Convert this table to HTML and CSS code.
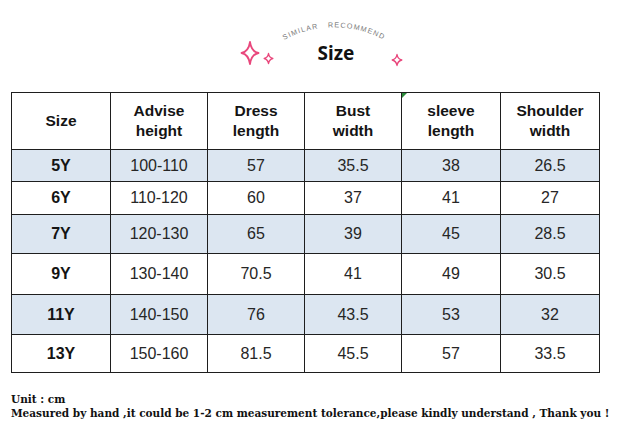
FILE: index.html
```html
<!DOCTYPE html>
<html lang="en">
<head>
<meta charset="utf-8">
<title>Size chart</title>
<link rel="stylesheet" href="styles.css">
</head>
<body>
<header class="hero">
  <div class="hero-inner">
    <svg class="hero-deco" width="196" height="92" viewBox="0 0 196 92" aria-hidden="true">
      <defs>
        <path id="arc" d="M 40 43.5 A 105 105 0 0 1 152 43.5"/>
      </defs>
      <g fill="none" stroke="#e9477c" stroke-width="1.8" stroke-linejoin="round">
        <path d="M12 42 Q13.4 51.6 20.5 53 Q13.4 54.4 12 64 Q10.6 54.4 3.5 53 Q10.6 51.6 12 42 Z"/>
        <path d="M30.5 53.5 Q31.2 57.6 34.8 58.5 Q31.2 59.4 30.5 63.5 Q29.8 59.4 26.2 58.5 Q29.8 57.6 30.5 53.5 Z" stroke-width="1.4"/>
        <path d="M159 54.5 Q159.7 59 163.8 60 Q159.7 61 159 65.5 Q158.3 61 154.2 60 Q158.3 59 159 54.5 Z" stroke-width="1.3"/>
      </g>
      <text class="arc-text"><textPath href="#arc" startOffset="50%" text-anchor="middle">SIMILAR&#160;&#160;&#160;RECOMMEND</textPath></text>
    </svg>
    <h1 class="title">Size</h1>
  </div>
</header>

<table class="chart">
  <colgroup>
    <col class="c1"><col class="c2"><col class="c3"><col class="c4"><col class="c5"><col class="c6">
  </colgroup>
  <thead>
    <tr class="r0">
      <th>Size</th>
      <th>Advise<br>height</th>
      <th>Dress<br>length</th>
      <th>Bust<br>width</th>
      <th class="flag">sleeve<br>length</th>
      <th>Shoulder<br>width</th>
    </tr>
  </thead>
  <tbody>
    <tr class="r1 shade"><th>5Y</th><td>100-110</td><td>57</td><td>35.5</td><td>38</td><td>26.5</td></tr>
    <tr class="r2"><th>6Y</th><td>110-120</td><td>60</td><td>37</td><td>41</td><td>27</td></tr>
    <tr class="r3 shade"><th>7Y</th><td>120-130</td><td>65</td><td>39</td><td>45</td><td>28.5</td></tr>
    <tr class="r4"><th>9Y</th><td>130-140</td><td>70.5</td><td>41</td><td>49</td><td>30.5</td></tr>
    <tr class="r5 shade"><th>11Y</th><td>140-150</td><td>76</td><td>43.5</td><td>53</td><td>32</td></tr>
    <tr class="r6"><th>13Y</th><td>150-160</td><td>81.5</td><td>45.5</td><td>57</td><td>33.5</td></tr>
  </tbody>
</table>

<footer class="notes">
  <p>Unit : cm</p>
  <p>Measured by hand ,it could be 1-2 cm measurement tolerance,please kindly understand , Thank you !</p>
</footer>
</body>
</html>
```

FILE: styles.css
```css
html, body {
  margin: 0;
  padding: 0;
  background: #ffffff;
}

body {
  width: 620px;
  height: 438px;
  overflow: hidden;
  font-family: "Liberation Sans", Arial, sans-serif;
}

.hero {
  height: 92px;
  display: flex;
  padding-left: 238px;
  box-sizing: border-box;
}

.hero-inner {
  position: relative;
  width: 196px;
  height: 92px;
}

.hero-deco {
  position: absolute;
  left: 0;
  top: 0;
}

.arc-text {
  font-family: "Liberation Sans", Arial, sans-serif;
  font-size: 7.2px;
  letter-spacing: 1.1px;
  fill: #7a7a7a;
}

.title {
  position: relative;
  margin: 0;
  padding-top: 47px;
  text-align: center;
  font-family: "Noto Sans", "Open Sans", sans-serif;
  font-weight: 700;
  font-size: 19px;
  line-height: 12px;
  color: #111111;
}

.chart {
  margin-left: 11px;
  border-collapse: collapse;
  table-layout: fixed;
  width: 588px;
}

.c1 { width: 99px; }
.c2 { width: 97px; }
.c3 { width: 97px; }
.c4 { width: 97px; }
.c5 { width: 99px; }
.c6 { width: 99px; }

.chart th,
.chart td {
  border: 1px solid #1e1e1e;
  padding: 0;
  text-align: center;
  vertical-align: middle;
  font-size: 16px;
  color: #262626;
}

.chart th {
  font-weight: 700;
  color: #141414;
}

.chart thead th {
  font-size: 15.5px;
  line-height: 20px;
  padding-bottom: 1px;
}

.flag {
  position: relative;
}

.flag::before {
  content: "";
  position: absolute;
  left: 0;
  top: 0;
  border-top: 5px solid #2a8a3a;
  border-right: 5px solid transparent;
}

.r0 { height: 57px; }
.r1 { height: 32px; }
.r2 { height: 33px; }
.r3 { height: 39px; }
.r4 { height: 41px; }
.r5 { height: 40px; }
.r6 { height: 38px; }

.shade th,
.shade td {
  background: #dce6f1;
}

.notes {
  margin-top: 19px;
  padding-left: 11px;
  font-family: "DejaVu Serif", "Liberation Serif", serif;
  font-weight: 700;
  font-size: 10.5px;
  line-height: 14px;
  color: #111111;
}

.notes p {
  margin: 0;
  white-space: nowrap;
}
```
